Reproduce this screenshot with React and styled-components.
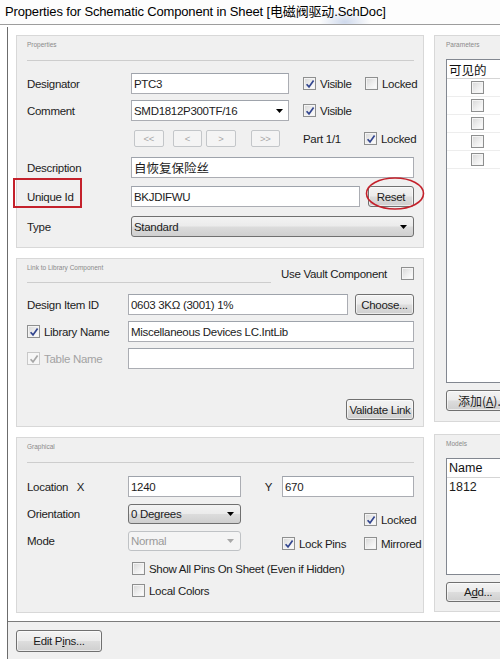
import React from 'react';
import styled, { createGlobalStyle } from 'styled-components';

const GlobalStyle = createGlobalStyle`
  html, body {
    margin: 0;
    padding: 0;
    background: #fff;
    overflow: hidden;
  }
  body {
    font-family: "Liberation Sans", Arial, "Noto Sans CJK SC", sans-serif;
    font-size: 11.5px;
    letter-spacing: -0.3px;
    color: #1c1c1c;
  }
`;

const Page = styled.div`
  width: 500px;
  height: 659px;
  position: relative;
  overflow: hidden;
  display: flex;
  flex-direction: column;
`;

const TitleBar = styled.div`
  height: 24px;
  flex-shrink: 0;
  border-bottom: 1px solid #9d9d9d;
  padding-left: 5px;
  font-size: 13px;
  letter-spacing: -0.15px;
  line-height: 23px;
  color: #000;
  white-space: nowrap;
  background:
    radial-gradient(ellipse 26px 12px at 345px 22px, rgba(120, 150, 205, 0.35), rgba(255, 255, 255, 0)),
    #fdfdfd;
`;

const Window = styled.div`
  flex: 1;
  margin: 2px 0 0 7px;
  border-left: 1px solid #6c6c6c;
  display: flex;
  flex-direction: column;
  min-height: 0;
`;

const Main = styled.div`
  box-sizing: border-box;
  height: 594px;
  flex-shrink: 0;
  display: flex;
  gap: 10px;
  padding: 8px 0 8px 8px;
  background: #fff;
`;

const Column = styled.div`
  width: ${p => p.$w}px;
  flex-shrink: 0;
  display: flex;
  flex-direction: column;
  gap: ${p => p.$gap}px;
`;

const Footer = styled.div`
  flex: 1;
  border-top: 1px solid #7c7c7c;
  background: #f0f0f0;
  padding: 8px 0 0 8px;
`;

const Panel = styled.section`
  box-sizing: border-box;
  height: ${p => p.$h}px;
  background: #f0f0f0;
  border: 1px solid #d8d8d8;
  padding: 0 9px 0 ${p => p.$pl || 10}px;
  display: flex;
  flex-direction: column;
`;

const PanelHeader = styled.div`
  box-sizing: border-box;
  height: ${p => p.$h || 25}px;
  flex-shrink: 0;
  display: flex;
  align-items: flex-start;
`;

const HeaderTitle = styled.div`
  box-sizing: border-box;
  flex: 1;
  height: 100%;
  padding-top: 5px;
  font-size: 6.5px;
  letter-spacing: 0;
  line-height: 7px;
  color: #8a8a8a;
  border-bottom: ${p => (p.$line ? '1px solid #cdcdcd' : 'none')};
`;

const VaultCell = styled.div`
  display: flex;
  align-items: center;
  gap: 14px;
  margin: 8px 0 0 10px;
  height: 13px;
  white-space: nowrap;
`;

const Row = styled.div`
  display: flex;
  align-items: center;
  height: ${p => p.$h || 21}px;
  margin-top: ${p => p.$mt || 0}px;
  padding-left: ${p => p.$pl || 0}px;
  justify-content: ${p => p.$justify || 'flex-start'};
  flex-shrink: 0;
`;

const Label = styled.div`
  width: ${p => p.$w}px;
  flex-shrink: 0;
  display: flex;
  align-items: center;
  gap: 4px;
  white-space: nowrap;
  color: ${p => (p.$disabled ? '#a3a3a3' : 'inherit')};
`;

const TextBox = styled.div`
  box-sizing: border-box;
  width: ${p => p.$w}px;
  height: ${p => p.$h || 21}px;
  flex-shrink: 0;
  border: 1px solid #abadb3;
  border-top-color: #9ea3ab;
  background: #fff;
  padding: 0 5px 0 2px;
  display: flex;
  align-items: center;
  justify-content: space-between;
  white-space: nowrap;
  overflow: hidden;
  font-family: ${p => (p.$cjk ? '"Noto Sans CJK SC", sans-serif' : 'inherit')};
  font-size: ${p => (p.$cjk ? '12.5px' : 'inherit')};
  letter-spacing: ${p => (p.$cjk ? '0' : 'inherit')};
`;

const DropButton = styled.div`
  box-sizing: border-box;
  width: ${p => p.$w}px;
  height: ${p => p.$h || 21}px;
  flex-shrink: 0;
  border: 1px solid ${p => (p.$disabled ? '#bfc2c5' : '#707070')};
  border-radius: 3px;
  background: ${p =>
    p.$disabled
      ? '#f4f4f4'
      : 'linear-gradient(#f3f3f3 0%, #ebebeb 48%, #dcdcdc 52%, #cfcfcf 100%)'};
  color: ${p => (p.$disabled ? '#9a9a9a' : 'inherit')};
  padding: 0 6px 0 2px;
  display: flex;
  align-items: center;
  justify-content: space-between;
  white-space: nowrap;
`;

const Button = styled.div`
  box-sizing: border-box;
  width: ${p => p.$w}px;
  height: ${p => p.$h || 21}px;
  flex-shrink: 0;
  margin-left: ${p => p.$ml || 0}px;
  padding-left: ${p => p.$pad || 0}px;
  border: 1px solid #707070;
  border-radius: 3px;
  background: linear-gradient(#f3f3f3 0%, #ebebeb 48%, #dddddd 52%, #cfcfcf 100%);
  box-shadow: inset 0 0 0 1px rgba(255, 255, 255, 0.6);
  display: flex;
  align-items: center;
  justify-content: ${p => (p.$pad ? 'flex-start' : 'center')};
  white-space: nowrap;
  font-family: ${p => (p.$cjk ? '"Noto Sans CJK SC", sans-serif' : 'inherit')};
  font-size: ${p => (p.$cjk ? '12px' : 'inherit')};
  letter-spacing: ${p => (p.$cjk ? '0' : 'inherit')};
  u {
    text-decoration: underline;
    text-underline-offset: 1px;
  }
`;

const NavButton = styled.div`
  box-sizing: border-box;
  width: 30px;
  height: 17px;
  margin-left: ${p => p.$ml || 0}px;
  border: 1px solid #c3c6c9;
  border-radius: 2px;
  background: #f4f4f4;
  color: #a8a8a8;
  font-size: 9.5px;
  display: flex;
  align-items: center;
  justify-content: center;
`;

const Cell = styled.div`
  box-sizing: border-box;
  width: ${p => p.$w}px;
  flex-shrink: 0;
  margin-left: ${p => p.$ml || 0}px;
  padding-right: ${p => p.$pr || 0}px;
  display: flex;
  align-items: center;
  justify-content: ${p => p.$justify || 'flex-start'};
  white-space: nowrap;
`;

const CheckWrap = styled.label`
  display: flex;
  align-items: center;
  gap: 4px;
  white-space: nowrap;
  color: ${p => (p.$disabled ? '#a3a3a3' : 'inherit')};
`;

const Box = styled.span`
  box-sizing: border-box;
  width: 13px;
  height: 13px;
  flex-shrink: 0;
  border: 1px solid ${p => (p.$disabled ? '#c8c8c8' : '#8e8f8f')};
  background: ${p =>
    p.$disabled ? '#f6f6f6' : 'linear-gradient(135deg, #d6d6d6 0%, #efefef 55%, #ffffff 100%)'};
  box-shadow: inset 0 0 0 1px ${p => (p.$disabled ? '#f6f6f6' : '#f4f4f4')};
  display: flex;
  align-items: center;
  justify-content: center;
`;

const GraphicBlock = styled.div`
  display: flex;
  margin-top: ${p => p.$mt}px;
`;

const Stack = styled.div`
  display: flex;
  flex-direction: column;
  gap: ${p => p.$gap || 0}px;
  margin-left: ${p => p.$ml || 0}px;
  width: ${p => (p.$w ? `${p.$w}px` : 'auto')};
`;

const Table = styled.div`
  box-sizing: border-box;
  height: ${p => p.$h}px;
  width: 130px;
  flex-shrink: 0;
  border: 1px solid #828790;
  border-right: none;
  background: #fff;
`;

const TableHead = styled.div`
  box-sizing: border-box;
  height: 19px;
  border-bottom: 1px solid #d5d5d5;
  padding-left: 2px;
  display: flex;
  align-items: center;
  font-family: ${p => (p.$cjk ? '"Noto Sans CJK SC", sans-serif' : 'inherit')};
  font-size: 12.5px;
  letter-spacing: 0;
  color: #111;
`;

const TableRow = styled.div`
  box-sizing: border-box;
  height: 18px;
  border-bottom: ${p => (p.$lined ? '1px solid #ededed' : 'none')};
  padding-left: ${p => p.$pl || 0}px;
  display: flex;
  align-items: center;
  font-size: 12.5px;
  letter-spacing: 0;
`;

const CheckCell = styled.div`
  width: 60px;
  display: flex;
  justify-content: center;
`;

const BottomBar = styled.div`
  margin-top: 7px;
  display: flex;
`;

const RedBox = styled.div`
  position: absolute;
  left: 13px;
  top: 178px;
  width: 69px;
  height: 30px;
  box-sizing: border-box;
  border: 2px solid #c4212b;
  pointer-events: none;
`;

const RedRing = styled.svg`
  position: absolute;
  left: 364px;
  top: 176px;
  pointer-events: none;
`;

const Arrow = ({ color = '#000' }) => (
  <svg width="7" height="4" viewBox="0 0 7 4">
    <path d="M0 0H7L3.5 4Z" fill={color} />
  </svg>
);

function Check({ checked, disabled, children }) {
  return (
    <CheckWrap $disabled={disabled}>
      <Box $disabled={disabled}>
        {checked && (
          <svg width="10" height="10" viewBox="0 0 10 10">
            <path
              d="M1.6 5.2 L4 7.9 L8.6 1.4"
              fill="none"
              stroke={disabled ? '#a6a6a6' : '#33468f'}
              strokeWidth="1.7"
            />
          </svg>
        )}
      </Box>
      {children}
    </CheckWrap>
  );
}

export default function App() {
  return (
    <Page>
      <GlobalStyle />
      <TitleBar>Properties for Schematic Component in Sheet [电磁阀驱动.SchDoc]</TitleBar>
      <Window>
        <Main>
          <Column $w={408} $gap={10}>
            <Panel $h={213}>
              <PanelHeader>
                <HeaderTitle $line>Properties</HeaderTitle>
              </PanelHeader>
              <Row $mt={12}>
                <Label $w={104}>Designator</Label>
                <TextBox $w={158}>PTC3</TextBox>
                <Cell $w={62} $ml={14}><Check checked>Visible</Check></Cell>
                <Cell $w={50}><Check>Locked</Check></Cell>
              </Row>
              <Row $mt={6}>
                <Label $w={104}>Comment</Label>
                <TextBox $w={158}>SMD1812P300TF/16<Arrow /></TextBox>
                <Cell $w={62} $ml={14}><Check checked>Visible</Check></Cell>
              </Row>
              <Row $mt={9} $h={17} $pl={107}>
                <NavButton>&lt;&lt;</NavButton>
                <NavButton $ml={9}>&lt;</NavButton>
                <NavButton $ml={4}>&gt;</NavButton>
                <NavButton $ml={15}>&gt;&gt;</NavButton>
                <Cell $w={61} $ml={23}>Part 1/1</Cell>
                <Cell $w={50}><Check checked>Locked</Check></Cell>
              </Row>
              <Row $mt={10}>
                <Label $w={104}>Description</Label>
                <TextBox $w={283} $cjk>自恢复保险丝</TextBox>
              </Row>
              <Row $mt={8}>
                <Label $w={104}>Unique Id</Label>
                <TextBox $w={229}>BKJDIFWU</TextBox>
                <Button $w={46} $h={21} $ml={8}>Reset</Button>
              </Row>
              <Row $mt={9}>
                <Label $w={104}>Type</Label>
                <DropButton $w={283}>Standard<Arrow /></DropButton>
              </Row>
            </Panel>

            <Panel $h={169}>
              <PanelHeader $h={24}>
                <HeaderTitle $line>Link to Library Component</HeaderTitle>
                <VaultCell>
                  Use Vault Component
                  <Box />
                </VaultCell>
              </PanelHeader>
              <Row $mt={11}>
                <Label $w={101}>Design Item ID</Label>
                <TextBox $w={220}>0603 3KΩ (3001) 1%</TextBox>
                <Button $w={59} $ml={7}>Choose...</Button>
              </Row>
              <Row $mt={6}>
                <Label $w={101}><Check checked>Library Name</Check></Label>
                <TextBox $w={286}>Miscellaneous Devices LC.IntLib</TextBox>
              </Row>
              <Row $mt={6}>
                <Label $w={101}><Check checked disabled>Table Name</Check></Label>
                <TextBox $w={286} />
              </Row>
              <Row $mt={30} $justify="flex-end">
                <Button $w={68}>Validate Link</Button>
              </Row>
            </Panel>

            <Panel $h={176}>
              <PanelHeader>
                <HeaderTitle $line>Graphical</HeaderTitle>
              </PanelHeader>
              <Row $mt={13}>
                <Label $w={101}>Location&nbsp;&nbsp;&nbsp;X</Label>
                <TextBox $w={113}>1240</TextBox>
                <Cell $w={41} $justify="flex-end" $pr={10}>Y</Cell>
                <TextBox $w={132}>670</TextBox>
              </Row>
              <GraphicBlock $mt={7}>
                <Stack $gap={7}>
                  <Row $h={20}>
                    <Label $w={101}>Orientation</Label>
                    <DropButton $w={113} $h={20}>0 Degrees<Arrow /></DropButton>
                  </Row>
                  <Row $h={20}>
                    <Label $w={101}>Mode</Label>
                    <DropButton $w={113} $h={20} $disabled>Normal<Arrow color="#a8a8a8" /></DropButton>
                  </Row>
                </Stack>
                <Stack $ml={41} $w={133}>
                  <Row $h={13} $mt={9}>
                    <Cell $w={82} />
                    <Check checked>Locked</Check>
                  </Row>
                  <Row $h={13} $mt={11}>
                    <Cell $w={82}><Check checked>Lock Pins</Check></Cell>
                    <Check>Mirrored</Check>
                  </Row>
                </Stack>
              </GraphicBlock>
              <Row $h={13} $mt={11} $pl={105}>
                <Check>Show All Pins On Sheet (Even if Hidden)</Check>
              </Row>
              <Row $h={13} $mt={9} $pl={105}>
                <Check>Local Colors</Check>
              </Row>
            </Panel>
          </Column>

          <Column $w={140} $gap={12}>
            <Panel $h={387} $pl={11}>
              <PanelHeader $h={23}>
                <HeaderTitle>Parameters</HeaderTitle>
              </PanelHeader>
              <Table $h={324}>
                <TableHead $cjk>可见的</TableHead>
                {[0, 1, 2, 3, 4].map(i => (
                  <TableRow key={i} $lined>
                    <CheckCell><Box /></CheckCell>
                  </TableRow>
                ))}
              </Table>
              <BottomBar>
                <Button $w={90} $cjk $pad={11}>
                  添加(<u>A</u>)...
                </Button>
              </BottomBar>
            </Panel>

            <Panel $h={178} $pl={11}>
              <PanelHeader $h={23}>
                <HeaderTitle>Models</HeaderTitle>
              </PanelHeader>
              <Table $h={117}>
                <TableHead>Name</TableHead>
                <TableRow $pl={2}>1812</TableRow>
              </Table>
              <BottomBar>
                <Button $w={90} $h={20} $pad={17}>
                  A<u>d</u>d...
                </Button>
              </BottomBar>
            </Panel>
          </Column>
        </Main>
        <Footer>
          <Button $w={86} $h={22}>Edit P<u>i</u>ns...</Button>
        </Footer>
      </Window>

      <RedBox />
      <RedRing width="62" height="36" viewBox="0 0 62 36">
        <ellipse cx="31" cy="17.5" rx="28.5" ry="15.5" fill="none" stroke="#c4212b" strokeWidth="1.6" />
      </RedRing>
    </Page>
  );
}
